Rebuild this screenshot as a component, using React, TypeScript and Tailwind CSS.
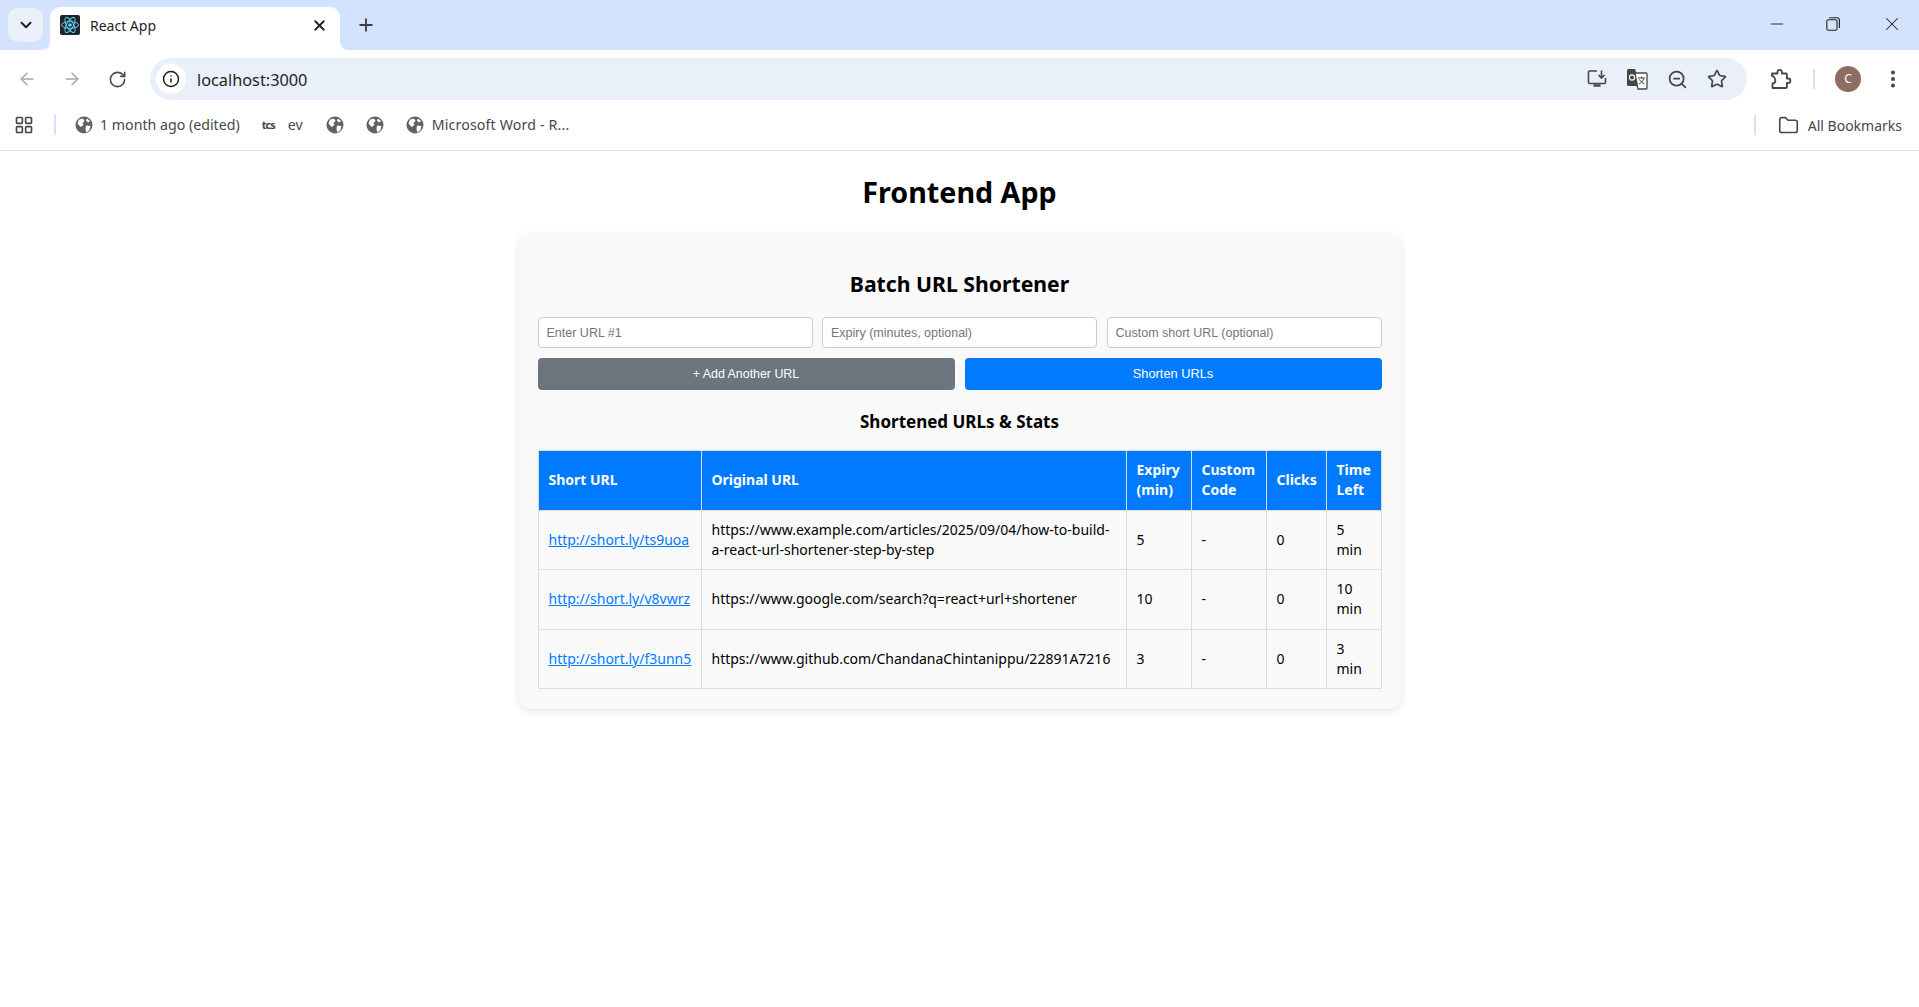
import { ArrowLeft, ArrowRight, ChevronDown, Info, LayoutGrid, Minus, MoreVertical, Plus, RotateCw, Star, X, ZoomOut, Folder } from 'lucide-react'

const rows = [
  { code: 'ts9uoa', url: 'https://www.example.com/articles/2025/09/04/how-to-build-a-react-url-shortener-step-by-step', expiry: 5 },
  { code: 'v8vwrz', url: 'https://www.google.com/search?q=react+url+shortener', expiry: 10 },
  { code: 'f3unn5', url: 'https://www.github.com/ChandanaChintanippu/22891A7216', expiry: 3 },
]

function Globe({ className }: { className: string }) {
  return (
    <svg className={className} viewBox="0 0 18 18">
      <circle cx="9" cy="9" r="8.5" fill="#5f6368" />
      <path d="M4 3.5 8 2.5 9.5 5 7.5 7 8.5 9 5.5 11 2.5 7.5zM11 9.5l4.5 0.5-1 4-3 2.5-1-3zM12 2.5l3 2.5-2 1.5-2-2z" fill="#ffffff" />
    </svg>
  )
}

function Favicon() {
  return (
    <svg className="w-5 h-5 shrink-0" viewBox="0 0 20 20">
      <rect width="20" height="20" rx="2" fill="#20232a" />
      <circle cx="10" cy="10" r="1.8" fill="#61dafb" />
      <g fill="none" stroke="#61dafb" strokeWidth="0.9">
        <ellipse cx="10" cy="10" rx="8.5" ry="3.4" />
        <ellipse cx="10" cy="10" rx="8.5" ry="3.4" transform="rotate(60 10 10)" />
        <ellipse cx="10" cy="10" rx="8.5" ry="3.4" transform="rotate(120 10 10)" />
      </g>
    </svg>
  )
}

function TabStrip() {
  return (
    <div className="h-[50px] bg-[#d3e3fd] flex items-start pl-2 relative">
      <div className="mt-2 w-[35px] h-[34px] rounded-[10px] bg-[#eaf1fb] flex items-center justify-center">
        <ChevronDown size={18} strokeWidth={2.6} color="#1f1f1f" />
      </div>
      <div className="ml-[7px] mt-[7px] w-[290px] h-[43px] bg-white rounded-t-[10px] flex items-center pl-2.5 pr-3 pb-[7px] relative">
        <svg className="absolute -left-2 bottom-0 w-2 h-2" viewBox="0 0 8 8"><path d="M8 0v8H0a8 8 0 0 0 8-8z" fill="#fff" /></svg>
        <svg className="absolute -right-2 bottom-0 w-2 h-2" viewBox="0 0 8 8"><path d="M0 0v8h8a8 8 0 0 1-8-8z" fill="#fff" /></svg>
        <Favicon />
        <span className="ml-2.5 text-[14px] text-[#1f1f1f] flex-1">React App</span>
        <X size={17} strokeWidth={2.6} color="#1f1f1f" />
      </div>
      <Plus size={20} strokeWidth={2.2} color="#3c3c3c" className="ml-4 mt-[15px]" />
      <div className="ml-auto flex items-center h-[48px]">
        <div className="w-14 flex justify-center"><Minus size={20} strokeWidth={1.1} color="#1f1f1f" /></div>
        <div className="w-14 flex justify-center">
          <svg className="w-[14px] h-[14px]" viewBox="0 0 14 14" fill="none" stroke="#1f1f1f" strokeWidth="1.1">
            <rect x="0.8" y="2.8" width="10.2" height="10.4" rx="1.5" />
            <path d="M3.2 0.7h8a2.2 2.2 0 0 1 2.2 2.2v8" />
          </svg>
        </div>
        <div className="w-[58px] flex justify-center pl-1"><X size={22} strokeWidth={1.1} color="#1f1f1f" /></div>
      </div>
    </div>
  )
}

function InstallIcon() {
  return (
    <svg className="w-5 h-5" viewBox="0 0 20 20" fill="none" stroke="#444746" strokeWidth="1.6">
      <path d="M10 2H2.5A1 1 0 0 0 1.5 3v10.5a1 1 0 0 0 1 1h15a1 1 0 0 0 1-1V9" />
      <path d="M14.5 1.5v7M11.5 6l3 3 3-3" />
      <path d="M6.5 16.5h7" strokeWidth="2.4" />
    </svg>
  )
}

function TranslateIcon() {
  return (
    <svg className="w-[22px] h-[22px]" viewBox="0 0 22 22">
      <path d="M1 2.5A1.5 1.5 0 0 1 2.500 1H9l6 17H2.500A1.500 1.500 0 0 1 1 16.500z" fill="#444746" />
      <path d="M9 5h11a1 1 0 0 1 1 1v14a1 1 0 0 1-1 1h-8z" fill="#fff" stroke="#444746" strokeWidth="1.3" />
      <circle cx="6" cy="9.500" r="2.600" fill="none" stroke="#fff" strokeWidth="1.200" />
      <path d="M12 10h7M15.500 8.500v1.500M18 10c-1 3-3 5-5 6M13.500 11.500c1 2 3 3.500 5 4.500" fill="none" stroke="#444746" strokeWidth="1" />
    </svg>
  )
}

function PuzzleIcon() {
  return (
    <svg className="w-[22px] h-[22px]" viewBox="0 0 22 22" fill="none" stroke="#444746" strokeWidth="1.8" strokeLinejoin="round">
      <path d="M2 8V5.500h5.500V4a2.200 2.200 0 0 1 4.400 0v1.500h4a1 1 0 0 1 1 1v4h1.300a2.200 2.200 0 0 1 0 4.400h-1.300V19a1 1 0 0 1-1 1H2.500v-4.500c2.400 0 2.800-1 2.800-2.500S4.500 8 2 8z" />
    </svg>
  )
}

function Toolbar() {
  return (
    <div className="h-[50px] bg-white rounded-t-[10px] flex items-start pt-2 relative">
      <div className="w-[150px] h-[42px] flex items-center">
        <ArrowLeft size={20} color="#a4a6a8" strokeWidth={1.8} className="ml-[17px]" />
        <ArrowRight size={20} color="#a4a6a8" strokeWidth={1.8} className="ml-[25px]" />
        <RotateCw size={19} color="#444746" strokeWidth={2} className="ml-[26px]" />
      </div>
      <div className="w-[1597px] h-[42px] bg-[#eaf0fa] rounded-full flex items-center pl-1.5">
        <div className="w-[30px] h-[30px] rounded-full bg-white flex items-center justify-center">
          <Info size={18} color="#1f1f1f" strokeWidth={2} />
        </div>
        <span className="ml-[11px] text-[16.300px] text-[#1f1f1f] translate-y-px">localhost:3000</span>
        <div className="ml-auto flex items-center gap-[19px] pr-5">
          <InstallIcon />
          <TranslateIcon />
          <ZoomOut size={21} color="#444746" strokeWidth={2} />
          <Star size={20} color="#444746" strokeWidth={2} />
        </div>
      </div>
      <div className="flex-1 h-[42px] flex items-center">
        <div className="ml-[23px]"><PuzzleIcon /></div>
        <div className="ml-[21px] w-0.5 h-5 bg-[#d3e3fd]" />
        <div className="ml-5 w-[26px] h-[26px] rounded-full bg-[#8d6e63] text-white text-[12px] flex items-center justify-center">C</div>
        <MoreVertical size={22} color="#444746" strokeWidth={2.4} className="ml-[21px]" />
      </div>
    </div>
  )
}

function BookmarkBar() {
  return (
    <div className="h-[51px] bg-white border-b border-[#e0e0e0] flex items-center text-[14.200px] text-[#474747]">
      <LayoutGrid size={20} color="#444746" strokeWidth={2} className="ml-[14px]" />
      <div className="ml-5 w-0.5 h-5 bg-[#d3e3fd]" />
      <Globe className="ml-[19px] w-[18px] h-[18px]" />
      <span className="ml-[7px]">1 month ago (edited)</span>
      <span className="ml-[22px] w-4 text-[11px] font-bold tracking-[-1px]">tcs</span>
      <span className="ml-[10px]">ev</span>
      <Globe className="ml-[23px] w-[18px] h-[18px]" />
      <Globe className="ml-[22px] w-[18px] h-[18px]" />
      <Globe className="ml-[22px] w-[18px] h-[18px]" />
      <span className="ml-2 tracking-[0.15px]">Microsoft Word - R...</span>
      <div className="ml-auto w-0.5 h-5 bg-[#d3e3fd]" />
      <Folder size={21} color="#444746" strokeWidth={1.8} className="ml-[22px]" />
      <span className="ml-[9px] mr-[17px] text-[14px]">All Bookmarks</span>
    </div>
  )
}

function UrlTable() {
  const th = 'border border-[#ddd] px-2.5 py-[9.250px] text-left font-bold'
  const td = 'border border-[#ddd] px-2.5 py-[9.250px]'
  return (
    <table className="w-[844px] table-fixed border-collapse text-[14px] leading-5 text-black">
      <thead>
        <tr className="bg-[#007bff] text-white">
          <th className={`${th} w-[163px]`}>Short URL</th>
          <th className={`${th} w-[425px]`}>Original URL</th>
          <th className={`${th} w-[65px]`}>Expiry<br />(min)</th>
          <th className={`${th} w-[75px]`}>Custom<br />Code</th>
          <th className={`${th} w-[60px]`}>Clicks</th>
          <th className={th}>Time<br />Left</th>
        </tr>
      </thead>
      <tbody>
        {rows.map((row) => (
          <tr key={row.code}>
            <td className={td}>
              <a href="#" className="text-[#007bff] underline">http://short.ly/{row.code}</a>
            </td>
            <td className={td}>{row.url}</td>
            <td className={td}>{row.expiry}</td>
            <td className={td}>-</td>
            <td className={td}>0</td>
            <td className={td}>{row.expiry}<br />min</td>
          </tr>
        ))}
      </tbody>
    </table>
  )
}

export default function App() {
  const input = "flex-1 min-w-0 h-[31px] px-2 bg-white border border-[#ccc] rounded text-[12.500px] font-['Liberation_Sans',sans-serif] placeholder:text-[#757575]"
  return (
    <div className="min-h-screen bg-white font-['Noto_Sans',sans-serif]">
      <TabStrip />
      <Toolbar />
      <BookmarkBar />
      <main className="flex flex-col items-center">
        <h1 className="mt-[21px] text-[28.700px] leading-10 font-bold text-black">Frontend App</h1>
        <div className="mt-[22px] mb-10 w-[882px] bg-[#f9f9f9] rounded-[10px] shadow-[0_2px_8px_rgba(0,0,0,0.1)] px-[19px] pt-9 pb-5">
          <h2 className="text-[21.200px] leading-7 font-bold text-center text-black">Batch URL Shortener</h2>
          <div className="mt-[19px] flex gap-[9.500px]">
            <input className={input} placeholder="Enter URL #1" />
            <input className={input} placeholder="Expiry (minutes, optional)" />
            <input className={input} placeholder="Custom short URL (optional)" />
          </div>
          <div className="mt-[10px] flex gap-[10px] font-['Liberation_Sans',sans-serif] text-[12.800px] text-white">
            <button className="flex-1 h-8 bg-[#6c757d] rounded text-[12.400px]">+ Add Another URL</button>
            <button className="flex-1 h-8 bg-[#007bff] rounded">Shorten URLs</button>
          </div>
          <h3 className="mt-5 mb-4 text-[17px] leading-6 font-bold text-center text-black">Shortened URLs &amp; Stats</h3>
          <UrlTable />
        </div>
      </main>
    </div>
  )
}
